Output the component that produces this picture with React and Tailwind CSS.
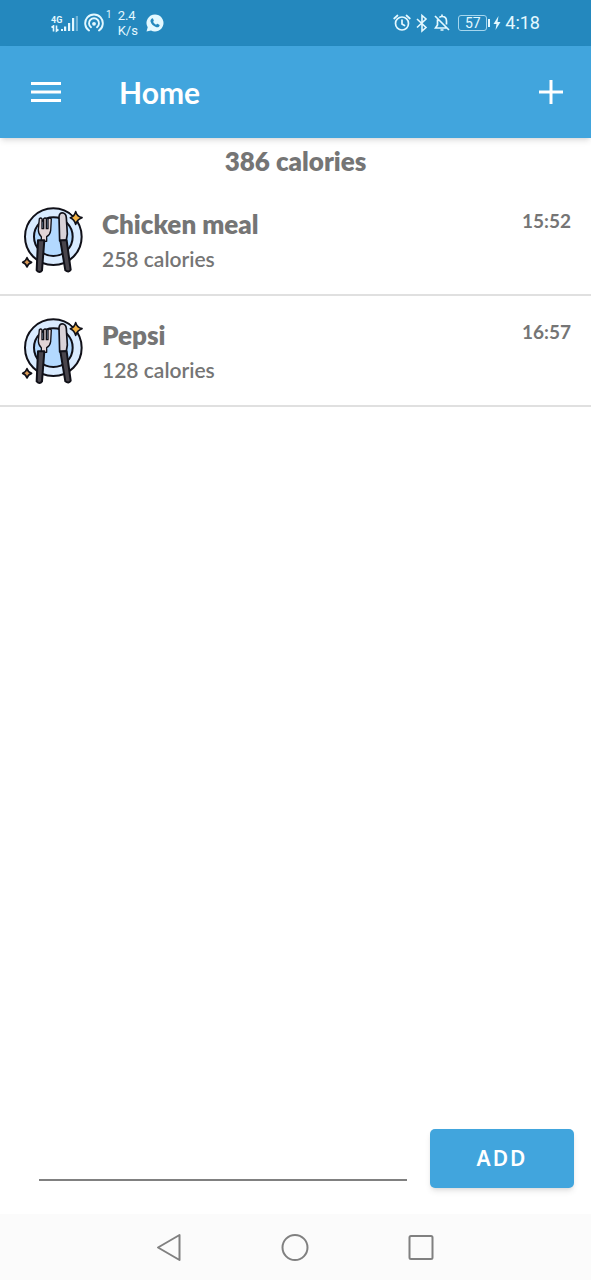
import React, { useState } from "react";

const initialMeals = [
  { name: "Chicken meal", calories: 258, time: "15:52" },
  { name: "Pepsi", calories: 128, time: "16:57" },
];

function SignalIcon() {
  return (
    <span className="flex h-5 w-7 items-end">
      <span className="flex w-2.5 flex-col text-[9px] leading-[10px] font-bold">
        <span>4G</span>
        <svg className="h-2 w-2.5" viewBox="0 0 10 8" fill="none" stroke="currentColor" strokeWidth="1.600" aria-hidden="true">
          <path d="M.5 2.500L2.500 1v5.500M5.500 .5V6l2-1.500" />
        </svg>
      </span>
      <svg className="h-5 w-[18px]" viewBox="0 0 18 20" fill="currentColor" aria-hidden="true">
        <path d="M0 16h2v2H0zM3 13.500h2.200V18H3zM7 10h2.200v8H7zM11 5h2.200v13H11z" />
        <path d="M14.800 3H17v15h-2.200z" opacity=".4" />
      </svg>
    </span>
  );
}

function HotspotIcon() {
  return (
    <svg className="h-5 w-5" viewBox="0 0 20 20" fill="none" stroke="currentColor" strokeWidth="1.900" strokeLinecap="round" aria-hidden="true">
      <path d="M5 17.500a8.800 8.800 0 1 1 10 0" />
      <path d="M7 14.300a5 5 0 1 1 6 0" />
      <circle cx="10" cy="10.800" r="1.900" fill="currentColor" stroke="none" />
    </svg>
  );
}

function ChatCallIcon() {
  return (
    <svg className="h-[18px] w-[18px]" viewBox="0 0 18 18" aria-hidden="true">
      <path fill="currentColor" d="M9 .5a8.500 8.500 0 1 1-4 16L.5 17.500l1.200-4.200A8.500 8.500 0 0 1 9 .5z" />
      <path fill="#2488be" d="M5.600 4.700c.6-.6 1.200-.5 1.500.1l.7 1.600c.2.500-.4 1-.7 1.400.7 1.400 1.700 2.300 3.100 2.900.4-.4.800-1.100 1.300-.9l1.700.9c.7.400.4 1.200-.1 1.700-.8.900-2 1-3.200.6-2.600-.9-4.500-2.700-5.300-5.200-.3-1.200 0-2.300 1-3.100z" />
    </svg>
  );
}

function AlarmIcon() {
  return (
    <svg className="h-5 w-[18px]" viewBox="0 0 18 20" fill="none" stroke="currentColor" strokeWidth="1.700" strokeLinecap="round" aria-hidden="true">
      <circle cx="9" cy="10.500" r="6.500" />
      <path d="M9 7v4l2.500 1.500M1.200 5.500L4.500 2.500M16.800 5.500L13.500 2.500" />
    </svg>
  );
}

function BluetoothIcon() {
  return (
    <svg className="h-5 w-3" viewBox="0 0 12 20" fill="none" stroke="currentColor" strokeWidth="1.600" aria-hidden="true">
      <path d="M1 6l9 8.500-4 3.500V2.500L10 6l-9 8.500" />
    </svg>
  );
}

function MutedBellIcon() {
  return (
    <svg className="h-5 w-4" viewBox="0 0 16 20" fill="none" stroke="currentColor" strokeWidth="1.700" aria-hidden="true">
      <path d="M1 3l14 14M5.300 4.500C6 3.800 7 3.500 8 3.500c2.800 0 4.500 2 4.500 4.500v3.500M3.500 6.500V12L1.500 15H13M8 1.500v2M6.500 17h3" />
    </svg>
  );
}

function StatusBar() {
  return (
    <div className="flex h-[46px] items-center justify-between bg-[#2488be] px-[51px] font-[Roboto,sans-serif] text-[#e3f8ff]">
      <div className="flex items-center">
        <SignalIcon />
        <span className="ml-[5px] flex h-7 items-center">
          <HotspotIcon />
          <span className="ml-0.5 self-start text-[10px] leading-3">1</span>
        </span>
        <span className="ml-1.5 flex w-7 flex-col text-[13px] leading-[15px]">
          <span>2.4</span>
          <span>K/s</span>
        </span>
        <ChatCallIcon />
      </div>
      <div className="flex items-center">
        <AlarmIcon />
        <span className="ml-[5px] flex"><BluetoothIcon /></span>
        <span className="ml-1.5 flex"><MutedBellIcon /></span>
        <span className="ml-2 flex h-4 w-[29px] items-center justify-center rounded-[3px] border border-[#a5d6ee] text-[14px] leading-none">57</span>
        <span className="ml-px h-2 w-0.5 bg-current" />
        <svg className="ml-[3px] h-3.5 w-2" viewBox="0 0 8 14" fill="currentColor" aria-hidden="true">
          <path d="M5.500 0L.5 8h3L2.500 14l5-8h-3z" />
        </svg>
        <span className="ml-1 text-[18px] leading-5">4:18</span>
      </div>
    </div>
  );
}

function PlateIcon() {
  return (
    <svg className="h-[70px] w-16 shrink-0" viewBox="30 30 192 210" stroke="#101018" strokeWidth="6" strokeLinejoin="round" strokeLinecap="round" aria-hidden="true">
      <circle cx="130" cy="125" r="85" fill="#d9ebff" />
      <path d="M178 44l14 12" stroke="#fff" strokeWidth="9" />
      <circle cx="130" cy="125" r="58" fill="#b3d9ff" />
      <path d="M88 71q4-4 8 0v30h5V71q4-4 8 0v30h5V72q5-5 10 0l-2 35q-2 13-12 18v14H94v-14q-9-8-9-20z" fill="#e2d5d7" strokeWidth="4" />
      <path d="M84 136h19l-7 90q-7 10-16 0z" fill="#49454c" />
      <path d="M149 138l-2-73q2-14 13-11 8 2 9 14l3 49-3 18z" fill="#d8d2d8" strokeWidth="5" />
      <path d="M151 136h19l12 88q-6 10-16 2z" fill="#49454c" />
      <path d="M197 50q4 14 19 18-15 5-19 20-4-15-16-20 12-4 16-18z" fill="#f4b345" strokeWidth="5" />
      <path d="M51 188q3 10 14 14-11 3-14 14-3-11-13-14 10-4 13-14z" fill="#d99a58" strokeWidth="5" />
    </svg>
  );
}

function MealRow({ meal }) {
  return (
    <li className="flex h-[111px] items-start border-b-2 border-[#e0e0e0] px-5 pt-5">
      <PlateIcon />
      <div className="ml-[18px] min-w-0 flex-1">
        <h2 className="text-[26px] leading-[38px] font-extrabold">{meal.name}</h2>
        <p className="text-[21px] leading-8 font-semibold">{meal.calories} calories</p>
      </div>
      <time className="text-[19px] leading-8 font-bold">{meal.time}</time>
    </li>
  );
}

export default function App() {
  const [meals] = useState(initialMeals);
  const total = meals.reduce((sum, meal) => sum + meal.calories, 0);

  return (
    <div className="flex min-h-screen flex-col bg-white font-[Lato,sans-serif] text-[#757575]">
      <StatusBar />
      <header className="flex h-[92px] items-center bg-[#41a5dd] pr-7 pl-[30px] text-white shadow-md">
        <button type="button" aria-label="Open menu" className="flex h-12 w-8 items-center">
          <svg className="h-6 w-8" viewBox="0 0 32 24" fill="currentColor" aria-hidden="true">
            <path d="M1 2h30v3H1zM1 10.500h30v3H1zM1 19h30v3H1z" />
          </svg>
        </button>
        <h1 className="ml-[57px] flex-1 text-[30px] leading-10 font-bold">Home</h1>
        <button type="button" aria-label="Add meal" className="flex h-12 w-6 items-center">
          <svg className="h-6 w-6" viewBox="0 0 24 24" fill="currentColor" aria-hidden="true">
            <path d="M10.500 0h3v10.500H24v3H13.500V24h-3V13.500H0v-3h10.500z" />
          </svg>
        </button>
      </header>
      <main className="flex flex-1 flex-col">
        <p className="h-[47px] pt-1 text-center text-[26px] leading-[38px] font-extrabold">{total} calories</p>
        <ul>
          {meals.map((meal) => (
            <MealRow key={meal.name} meal={meal} />
          ))}
        </ul>
        <form className="mt-auto flex items-end pr-[17px] pb-[26px] pl-[39px]" onSubmit={(event) => event.preventDefault()}>
          <input type="text" aria-label="Meal" className="mb-[7px] h-12 min-w-0 flex-1 border-b-2 border-[#808080] text-[21px] outline-none" />
          <button type="submit" className="ml-[23px] h-[59px] w-36 rounded-[5px] bg-[#41a5dd] font-['Noto_Sans',sans-serif] text-[21px] font-semibold tracking-widest text-white shadow-md">
            ADD
          </button>
        </form>
      </main>
      <nav aria-label="System" className="flex h-[66px] items-center justify-center gap-[98px] bg-[#fbfbfb] pr-0.5 text-[#808080]">
        <button type="button" aria-label="Back" className="flex">
          <svg className="h-7 w-7" viewBox="0 0 28 28" fill="none" stroke="currentColor" strokeWidth="2" strokeLinejoin="round" aria-hidden="true">
            <path d="M24.500 2v25L3 14.500z" />
          </svg>
        </button>
        <button type="button" aria-label="Home screen" className="flex">
          <svg className="h-7 w-7" viewBox="0 0 28 28" fill="none" stroke="currentColor" strokeWidth="2" aria-hidden="true">
            <circle cx="14" cy="14.500" r="12.500" />
          </svg>
        </button>
        <button type="button" aria-label="Recent apps" className="flex">
          <svg className="h-7 w-7" viewBox="0 0 28 28" fill="none" stroke="currentColor" strokeWidth="2" aria-hidden="true">
            <rect x="2.500" y="3" width="23" height="23" rx="1.500" />
          </svg>
        </button>
      </nav>
    </div>
  );
}
